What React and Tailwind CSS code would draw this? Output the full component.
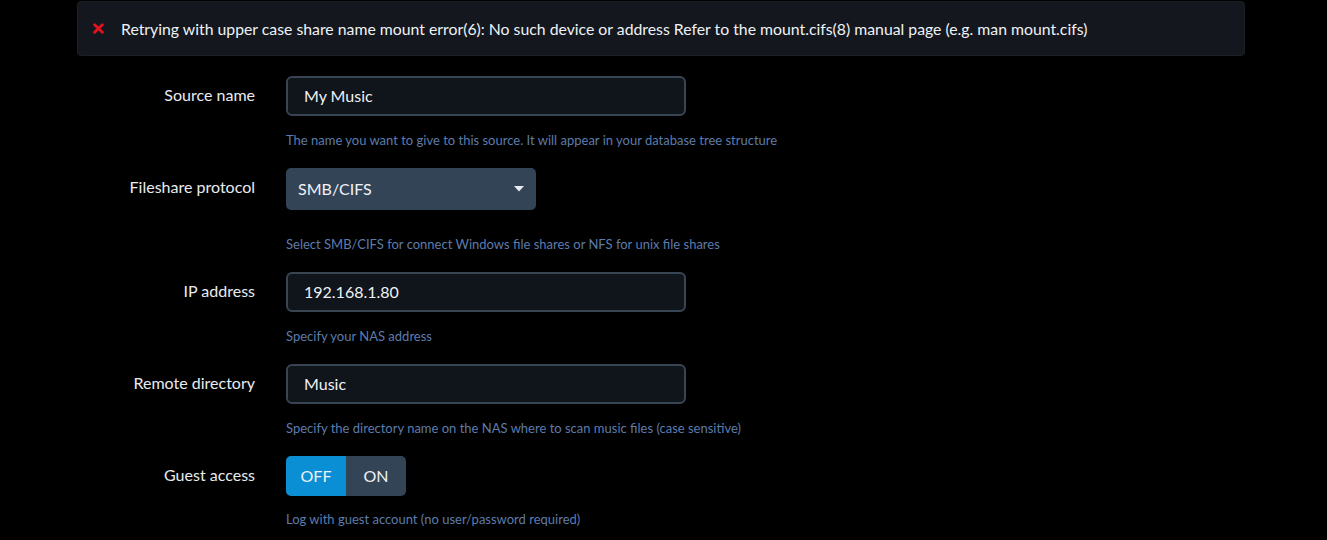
import React, { useState } from 'react';

const font = { fontFamily: 'Lato, "Open Sans", sans-serif' };

const Row = ({ label, help, children, helpGap = 'mt-[15px]' }) => (
  <div className="flex">
    <div className="w-[256px] shrink-0 pr-[1px] text-right text-[16px] leading-[24px] text-[#e8ecf1] pt-[7px]">{label}</div>
    <div className="ml-[30px] flex flex-col">
      {children}
      <div className={`${helpGap} text-[13px] leading-[18px] text-[#5d7cac]`}>{help}</div>
    </div>
  </div>
);

const TextInput = ({ value }) => (
  <div className="w-[400px] h-[40px] rounded-[6px] border-2 border-[#3a4553] bg-[#10141b] px-[16px] flex items-center text-[16px] text-[#eef2f6]">
    {value}
  </div>
);

export default function App() {
  const [guest, setGuest] = useState(false);

  return (
    <div className="w-[1327px] h-[540px] bg-black overflow-hidden" style={font}>
      <div className="ml-[77px] w-[1168px] h-[55px] mt-[1px] rounded-[4px] bg-[#14171d] border border-[#1b1f26] flex items-center">
        <svg className="ml-[15px] w-[11px] h-[11px]" viewBox="0 0 10 10">
          <path d="M1.5 1.5 L8.5 8.5 M8.5 1.5 L1.5 8.5" stroke="#e3121d" strokeWidth="2.6" strokeLinecap="round" />
        </svg>
        <span className="ml-[17px] text-[15.8px] text-[#eef2f6]">
          Retrying with upper case share name mount error(6): No such device or address Refer to the mount.cifs(8) manual page (e.g. man mount.cifs)
        </span>
      </div>

      <div className="mt-[20px] flex flex-col gap-[19px]">
        <Row label="Source name" help="The name you want to give to this source. It will appear in your database tree structure">
          <TextInput value="My Music" />
        </Row>

        <Row label="Fileshare protocol" help="Select SMB/CIFS for connect Windows file shares or NFS for unix file shares" helpGap="mt-[25px]">
          <div className="w-[250px] h-[42px] rounded-[5px] bg-[#344457] pl-[12px] pr-[12px] flex items-center justify-between text-[16px] text-[#eef2f6]">
            <span>SMB/CIFS</span>
            <svg className="w-[10px] h-[6px]" viewBox="0 0 10 6">
              <path d="M0 0 L10 0 L5 5.5 Z" fill="#e8ecf1" />
            </svg>
          </div>
        </Row>

        <Row label="IP address" help="Specify your NAS address">
          <TextInput value="192.168.1.80" />
        </Row>

        <Row label="Remote directory" help="Specify the directory name on the NAS where to scan music files (case sensitive)">
          <TextInput value="Music" />
        </Row>

        <Row label="Guest access" help="Log with guest account (no user/password required)" helpGap="mt-[14px]">
          <div className="flex w-[120px] h-[40px] rounded-[5px] overflow-hidden text-[16px] text-[#eef2f6]">
            <button
              onClick={() => setGuest(false)}
              className={`w-[60px] h-full flex items-center justify-center ${!guest ? 'bg-[#0b8fd4]' : 'bg-[#344457]'}`}
            >
              OFF
            </button>
            <button
              onClick={() => setGuest(true)}
              className={`w-[60px] h-full flex items-center justify-center ${guest ? 'bg-[#0b8fd4]' : 'bg-[#344457]'}`}
            >
              ON
            </button>
          </div>
        </Row>
      </div>
    </div>
  );
}
